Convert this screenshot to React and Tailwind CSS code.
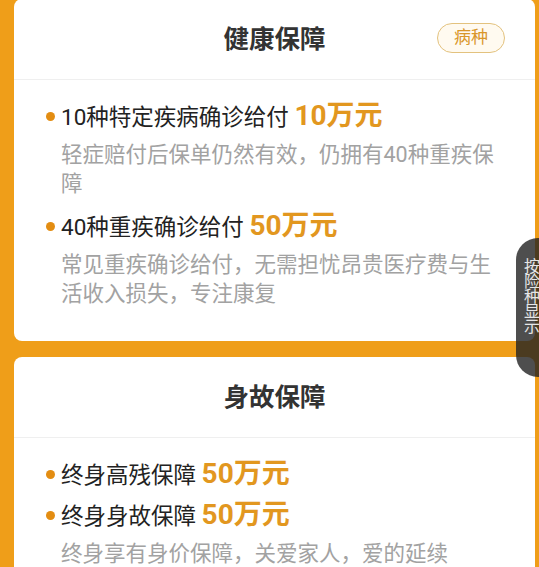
import React from "react";

const sections = [
  {
    title: "健康保障",
    tag: "病种",
    items: [
      {
        label: "10种特定疾病确诊给付",
        amount: "10万元",
        desc: "轻症赔付后保单仍然有效，仍拥有40种重疾保障",
      },
      {
        label: "40种重疾确诊给付",
        amount: "50万元",
        desc: "常见重疾确诊给付，无需担忧昂贵医疗费与生活收入损失，专注康复",
      },
    ],
  },
  {
    title: "身故保障",
    items: [
      { label: "终身高残保障", amount: "50万元" },
      {
        label: "终身身故保障",
        amount: "50万元",
        desc: "终身享有身价保障，关爱家人，爱的延续",
      },
    ],
  },
];

function Item({ item }) {
  return (
    <div>
      <div className="flex items-center leading-[34px]">
        <span className="mr-[6px] h-[9px] w-[9px] shrink-0 rounded-full bg-[#e38d12]" />
        <span className="text-[22.5px] text-[#222]">
          {item.label}{" "}
          <span className="text-[28px] font-bold text-[#e2971f]">
            {item.amount}
          </span>
        </span>
      </div>
      {item.desc && (
        <p className="pl-[15px] pr-[2px] pt-[6px] pb-[5px] text-[21.5px] leading-[29px] text-[#a2a2a2]">
          {item.desc}
        </p>
      )}
    </div>
  );
}

function Card({ section }) {
  return (
    <div className="rounded-[8px] bg-white">
      {/* Header */}
      <div className="relative flex h-[81px] items-center justify-center border-b border-[#efefef]">
        <h2 className="text-[25.5px] font-bold text-[#333]">{section.title}</h2>
        {section.tag && (
          <span className="absolute right-[30px] top-[24px] flex h-[30px] w-[68px] items-center justify-center rounded-full border border-[#e3c27e] bg-[#fffaf0] text-[17px] text-[#d9962a]">
            {section.tag}
          </span>
        )}
      </div>

      {/* Items */}
      <div className="flex flex-col gap-[6px] pl-[32px] pr-[33px] pt-[19px] pb-[28px]">
        {section.items.map((it) => (
          <Item key={it.label} item={it} />
        ))}
      </div>
    </div>
  );
}

export default function App() {
  return (
    <div
      className="relative h-[567px] overflow-hidden bg-[#ef9e19] pl-[14px] pr-[4px]"
      style={{ fontFamily: '"Roboto", "Noto Sans CJK SC", sans-serif' }}
    >
      <div className="-mt-px flex flex-col gap-[16px]">
        {sections.map((s) => (
          <Card key={s.title} section={s} />
        ))}
      </div>

      {/* Floating side tab */}
      <div className="absolute right-[-8px] top-[238px] h-[139px] w-[31px] rounded-l-[22px] bg-[rgba(34,34,34,0.8)] pl-[8px] pt-[21px]">
        <div className="w-[16px] text-[16px] leading-[15px] text-[#e6e6e6]">
          按险种显示
        </div>
      </div>
    </div>
  );
}
